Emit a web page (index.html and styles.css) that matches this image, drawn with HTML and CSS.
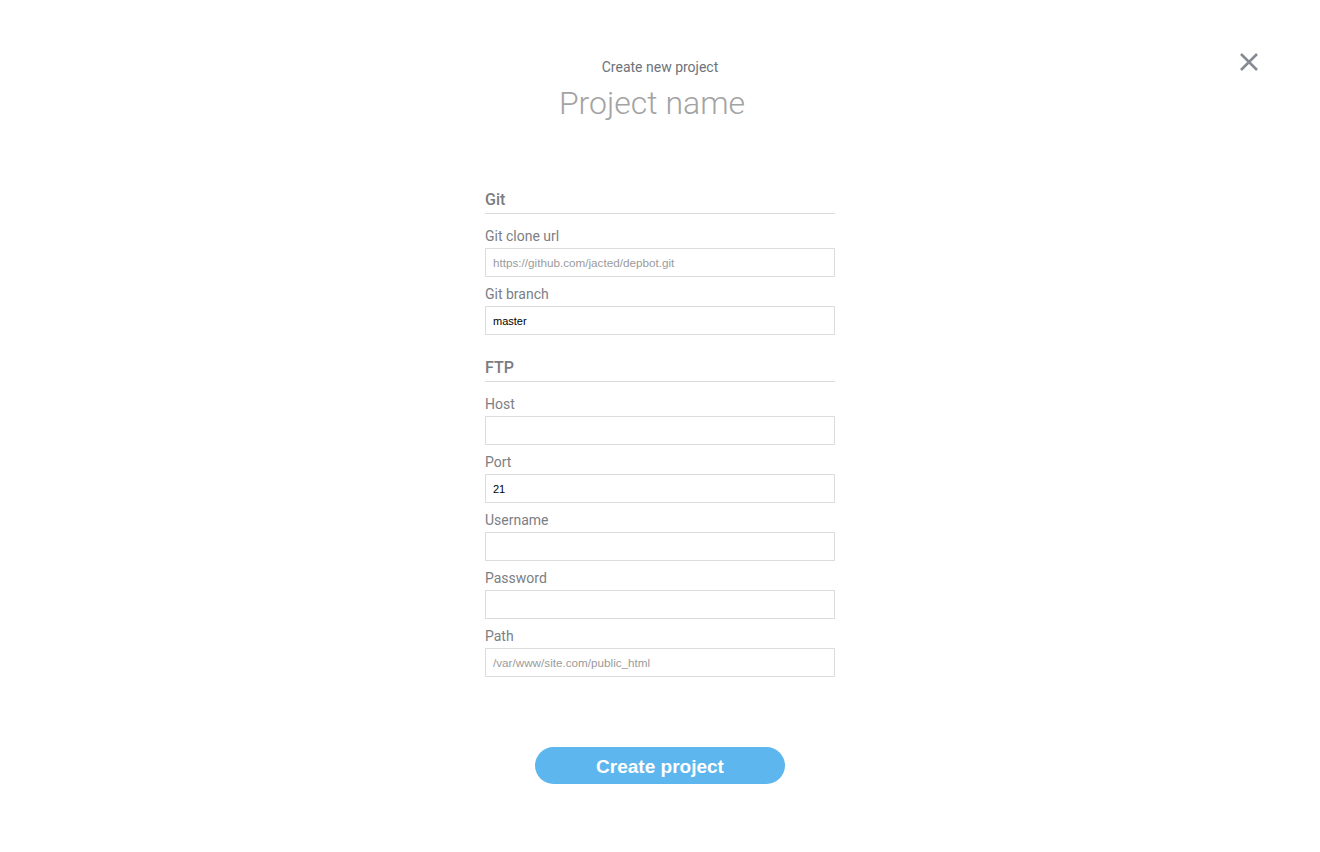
FILE: index.html
```html
<!DOCTYPE html>
<html>
<head>
<meta charset="utf-8">
<link rel="stylesheet" href="styles.css">
</head>
<body>
<div class="page">
  <button class="close" aria-label="Close">
    <svg width="20" height="20" viewBox="0 0 20 20"><path d="M2 2 L18 18 M18 2 L2 18" stroke="#858a93" stroke-width="2.6" stroke-linecap="butt"/></svg>
  </button>
  <header class="head">
    <div class="sub">Create new project</div>
    <div class="title">Project name</div>
  </header>
  <form class="form">
    <section class="group">
      <h2 class="group-title">Git</h2>
      <label class="field"><span class="label">Git clone url</span><input class="input" placeholder="https://github.com/jacted/depbot.git"></label>
      <label class="field"><span class="label">Git branch</span><input class="input" value="master"></label>
    </section>
    <section class="group">
      <h2 class="group-title">FTP</h2>
      <label class="field"><span class="label">Host</span><input class="input"></label>
      <label class="field"><span class="label">Port</span><input class="input" value="21"></label>
      <label class="field"><span class="label">Username</span><input class="input"></label>
      <label class="field"><span class="label">Password</span><input class="input" type="password"></label>
      <label class="field"><span class="label">Path</span><input class="input" placeholder="/var/www/site.com/public_html"></label>
    </section>
    <div class="actions"><button type="button" class="btn">Create project</button></div>
  </form>
</div>
</body>
</html>
```
FILE: styles.css
```css
* { box-sizing: border-box; }
html, body { margin: 0; padding: 0; background: #fff; }
body { font-family: Roboto, "Liberation Sans", sans-serif; }
.page { position: relative; width: 1320px; min-height: 852px; padding-top: 58px; }
.close { position: absolute; left: 1239px; top: 52px; width: 20px; height: 20px; padding: 0; border: 0; background: none; }
.close svg { display: block; }
.head { text-align: center; }
.sub { font-size: 14px; line-height: 18px; color: #6e7279; }
.title { margin-top: 8px; font-family: Roboto, sans-serif; font-weight: 300; font-size: 32px; line-height: 38px; color: #a3a3a3; padding-right: 16px; }
.form { width: 350px; margin: 67px auto 0; }
.group { margin-bottom: 22px; }
.group-title { margin: 0 0 14px; font-size: 16px; font-weight: 500; line-height: 20px; color: #7a7c82; padding: 1px 0 3px; border-bottom: 1px solid #dcdcdc; }
.field { display: flex; flex-direction: column; margin-bottom: 9px; }
.label { font-size: 14px; line-height: 16px; color: #7b7e84; margin-bottom: 4px; }
.input { height: 29px; border: 1px solid #dcdcdc; padding: 0 7px; font-family: "Liberation Sans", Arial, sans-serif; font-size: 11px; color: #000; outline: none; background: #fff; }
.input::placeholder { color: #9b9b9b; font-size: 11.7px; }
.actions { display: flex; justify-content: center; margin-top: 70px; }
.btn { width: 250px; height: 37px; border: 0; border-radius: 19px; background: #5eb6ee; color: #fff; font-family: "Liberation Sans", Arial, sans-serif; font-size: 19px; font-weight: 700; padding: 3px 0 0; }
```
